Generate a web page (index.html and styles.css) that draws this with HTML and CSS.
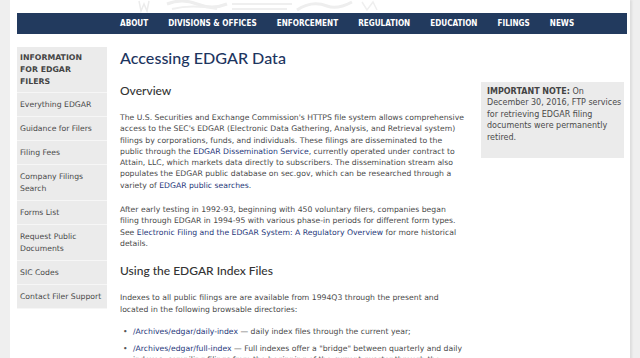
FILE: index.html
```html
<!DOCTYPE html>
<html lang="en">
<head>
    <meta charset="UTF-8">
    <meta name="viewport" content="width=device-width, initial-scale=1.0">
    <title>Accessing EDGAR Data</title>
    <link rel="stylesheet" href="styles.css">
</head>
<body>
    <div class="page">
        <header class="masthead">
            <svg class="seal" width="280" height="13" viewBox="0 0 280 13">
                <path d="M2 1 L4 11 L7 4 L10 11 L12 1" fill="none" stroke="#ececec" stroke-width="1.5"/>
                <path d="M30 4 Q45 -2 60 4 T90 4" fill="none" stroke="#eeeeee" stroke-width="3"/>
                <path d="M35 9 Q55 4 80 9" fill="none" stroke="#efefef" stroke-width="2"/>
                <rect x="95" y="3" width="60" height="2" fill="#efefef"/>
                <rect x="95" y="8" width="55" height="2" fill="#efefef"/>
                <path d="M160 10 Q175 0 190 6 Q200 10 215 2" fill="none" stroke="#eeeeee" stroke-width="3"/>
                <path d="M225 2 L230 10 L236 2 L240 10" fill="none" stroke="#efefef" stroke-width="1.5"/>
            </svg>
        </header>

        <nav class="topnav">
            <ul>
                <li><a href="#">ABOUT</a></li>
                <li><a href="#">DIVISIONS &amp; OFFICES</a></li>
                <li><a href="#">ENFORCEMENT</a></li>
                <li><a href="#">REGULATION</a></li>
                <li><a href="#">EDUCATION</a></li>
                <li><a href="#">FILINGS</a></li>
                <li><a href="#">NEWS</a></li>
            </ul>
        </nav>

        <div class="main">
            <aside class="sidenav">
                <h3>Information for EDGAR Filers</h3>
                <ul>
                    <li><a href="#">Everything EDGAR</a></li>
                    <li><a href="#">Guidance for Filers</a></li>
                    <li><a href="#">Filing Fees</a></li>
                    <li><a href="#">Company Filings Search</a></li>
                    <li><a href="#">Forms List</a></li>
                    <li><a href="#">Request Public Documents</a></li>
                    <li><a href="#">SIC Codes</a></li>
                    <li><a href="#">Contact Filer Support</a></li>
                </ul>
            </aside>

            <div class="content">
                <h1>Accessing EDGAR Data</h1>

                <h2>Overview</h2>
                <p>The U.S. Securities and Exchange Commission's HTTPS file system allows comprehensive access to the SEC's EDGAR (Electronic Data Gathering, Analysis, and Retrieval system) filings by corporations, funds, and individuals. These filings are disseminated to the public through the <a href="#">EDGAR Dissemination Service</a>, currently operated under contract to Attain, LLC, which markets data directly to subscribers. The dissemination stream also populates the EDGAR public database on sec.gov, which can be researched through a variety of <a href="#">EDGAR public searches</a>.</p>
                <p>After early testing in 1992-93, beginning with 450 voluntary filers, companies began filing through EDGAR in 1994-95 with various phase-in periods for different form types. See <a href="#">Electronic Filing and the EDGAR System: A Regulatory Overview</a> for more historical details.</p>

                <h2>Using the EDGAR Index Files</h2>
                <p>Indexes to all public filings are are available from 1994Q3 through the present and located in the following browsable directories:</p>
                <ul class="dirs">
                    <li><a href="#">/Archives/edgar/daily-index</a> &mdash; daily index files through the current year;</li>
                    <li><a href="#">/Archives/edgar/full-index</a> &mdash; Full indexes offer a "bridge" between quarterly and daily indexes, compiling filings from the beginning of the current quarter through the previous business day.</li>
                </ul>
            </div>

            <div class="note">
                <p><strong>IMPORTANT NOTE:</strong> On December 30, 2016, FTP services for retrieving EDGAR filing documents were permanently retired.</p>
            </div>
        </div>
    </div>
</body>
</html>
```

FILE: styles.css
```css
html, body {
    height: 100%;
}

body {
    margin: 0;
    background-color: #efefef;
    font-family: 'DejaVu Sans', Verdana, sans-serif;
    font-size: 7.7px;
    line-height: 11.3px;
    color: #4a4a4a;
    overflow: hidden;
}

a {
    color: #26377a;
    text-decoration: none;
}

.page {
    margin-left: 10px;
    width: 610px;
    min-height: 100%;
    padding: 0 3px 0 7px;
    background-color: #fff;
    box-shadow: 2px 0 2px rgba(0,0,0,0.08);
}

.masthead {
    height: 13px;
    overflow: hidden;
}

.seal {
    display: block;
    margin-left: 120px;
}

/* top navigation */
.topnav {
    background-color: #223a5e;
    height: 21px;
}

.topnav ul {
    list-style: none;
    margin: 0;
    padding: 0 0 0 93px;
    display: flex;
}

.topnav a {
    display: block;
    padding: 0 10px;
    font-family: 'DejaVu Sans Condensed', 'DejaVu Sans', sans-serif;
    font-stretch: condensed;
    font-weight: bold;
    font-size: 8.1px;
    line-height: 21px;
    color: #fff;
}

.main {
    display: flex;
    align-items: flex-start;
    margin-top: 13px;
}

/* left side menu */
.sidenav {
    width: 90px;
    flex-shrink: 0;
    background-color: #ebebeb;
}

.sidenav h3 {
    margin: 0;
    padding: 5px 10px 4px 3px;
    font-size: 7.8px;
    line-height: 12px;
    font-weight: bold;
    text-transform: uppercase;
    color: #444;
    border-bottom: 1px solid #f6f6f6;
}

.sidenav ul {
    list-style: none;
    margin: 0;
    padding: 0;
}

.sidenav li a {
    display: block;
    padding: 6px 3px 5px;
    line-height: 12px;
    color: #4a4a4a;
    border-bottom: 1px solid #f6f6f6;
}

/* main text */
.content {
    width: 345px;
    flex-shrink: 0;
    margin-left: 13px;
}

.content h1 {
    margin: 0;
    font-family: Lato, 'Open Sans', sans-serif;
    font-weight: 500;
    font-size: 16.1px;
    line-height: 22px;
    color: #1d3560;
}

.content h2 {
    margin: 0;
    font-family: Lato, 'Open Sans', sans-serif;
    font-weight: 500;
    font-size: 12px;
    line-height: 18px;
    color: #333;
}

.content h1 + h2 {
    margin-top: 13px;
}

.content p {
    margin: 0 0 13px;
}

.content h2 + p {
    margin-top: 12px;
}

.dirs {
    margin: -2px 0 0;
    padding: 0 0 0 13px;
    list-style: none;
}

.dirs li {
    position: relative;
    margin-bottom: 6px;
}

.dirs li::before {
    content: "\2022";
    position: absolute;
    left: -10px;
    color: #555;
}

/* right note */
.note {
    width: 137px;
    margin-left: 16px;
    margin-top: 35px;
    padding: 4px 0 15px 6px;
    background-color: #ebebeb;
    font-size: 8px;
    line-height: 11.4px;
}

.note p {
    margin: 0;
}

.note strong {
    color: #444;
}
```
